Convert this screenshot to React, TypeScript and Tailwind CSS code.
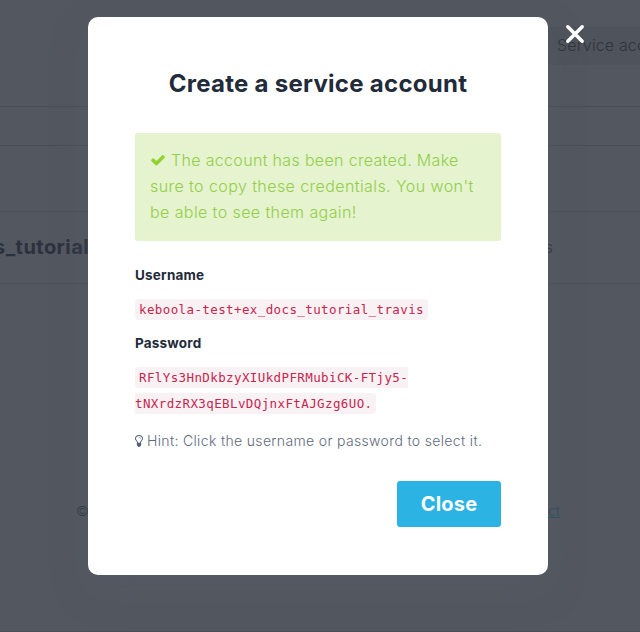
import React from "react";

function CheckIcon() {
  return (
    <svg viewBox="0 0 1792 1792" className="mr-[5px] inline-block h-4 w-4 fill-[#92d133] align-[-2px]">
      <path d="M1671 566q0 40-28 68l-724 724-136 136q-28 28-68 28t-68-28l-136-136-362-362q-28-28-28-68t28-68l136-136q28-28 68-28t68 28l294 295 656-657q28-28 68-28t68 28l136 136q28 28 28 68z" />
    </svg>
  );
}

function BulbIcon() {
  return (
    <svg viewBox="384 128 1024 1536" className="mr-1 h-3 w-2 fill-[#566178]">
      <path d="M1120 576q0 13-9.5 22.5t-22.5 9.5-22.5-9.5-9.5-22.5q0-46-54-71t-106-25q-13 0-22.5-9.5t-9.5-22.5 9.5-22.5 22.5-9.5q50 0 99.5 16t87 54 37.5 90zm160 0q0-72-34.5-134t-90-101.5-123-62-136.5-22.5-136.5 22.5-123 62-90 101.5-34.5 134q0 101 68 180 10 11 30.5 33t30.5 33q128 153 141 298h228q13-145 141-298 10-11 30.5-33t30.5-33q68-79 68-180zm128 0q0 155-103 268-45 49-74.5 87t-59.5 95.5-34 107.5q47 28 47 82 0 37-25 64 25 27 25 64 0 52-45 81 13 23 13 47 0 46-31.5 71t-77.5 25q-20 44-60 70t-87 26-87-26-60-70q-46 0-77.5-25t-31.5-71q0-24 13-47-45-29-45-81 0-37 25-64-25-27-25-64 0-54 47-82-4-50-34-107.5t-59.5-95.5-74.5-87q-103-113-103-268 0-99 44.5-184.5t117-142 164-89 186.5-32.5 186.5 32.5 164 89 117 142 44.5 184.5z" />
    </svg>
  );
}

function PageBehind() {
  return (
    <div className="flex h-full flex-col overflow-hidden">
      <div className="mt-[27px] flex h-[38px] justify-end">
        <div className="w-[92px] whitespace-nowrap bg-[#4f535b] pl-[9px] text-base font-light leading-[37px] tracking-[0.15px] text-[#30343c]">
          Service acc
        </div>
      </div>
      <div className="mt-[41px] h-10 border-y border-[#494e59]" />
      <div className="mt-[65px] flex h-[73px] items-center justify-between border-y border-[#4b505a]">
        <span className="-ml-[6px] whitespace-nowrap pb-px text-[20px] font-bold tracking-[0.45px] text-[#2b313e]">s_tutorial</span>
        <span className="mr-[87px] pb-px text-base font-light text-[#30343c]">s</span>
      </div>
      <div className="mt-[216px] flex justify-between pl-[76px] pr-20 text-[14px] font-light leading-[22px]">
        <span className="text-[#333944]">©</span>
        <span className="text-[#2c5060] underline">ct</span>
      </div>
      <div className="mt-auto h-px bg-[#4c4f58]" />
    </div>
  );
}

export default function App() {
  return (
    <div className="relative h-[632px] w-[640px] overflow-hidden bg-[#53575f] font-['Inter','Liberation_Sans',sans-serif]">
      <PageBehind />
      <div role="dialog" className="absolute left-[88px] top-[17px] flex h-[558px] w-[460px] flex-col rounded-[10px] bg-white px-[47px] pt-[50px] shadow-[0_15px_35px_rgba(85,93,107,0.45)]">
        <h1 className="whitespace-nowrap text-center text-[24px] font-bold leading-[34px] tracking-[0.27px] text-[#222b3a]">
          Create a service account
        </h1>
        <div className="mt-8 h-[108px] whitespace-nowrap rounded-[3px] bg-[#e5f3cf] px-[15px] pt-[14px] text-[16px] font-light leading-[26px] text-[#92ce48]">
          <p className="tracking-[0.33px]"><CheckIcon />The account has been created. Make</p>
          <p className="tracking-[0.42px]">sure to copy these credentials. You won't</p>
          <p className="tracking-[0.41px]">be able to see them again!</p>
        </div>
        <h2 className="mt-6 text-[13.5px] font-bold leading-5 tracking-[0.2px] text-[#222b3a]">Username</h2>
        <div className="mt-3 h-[26px] font-['DejaVu_Sans_Mono',monospace] text-[12.5px] leading-[26px] tracking-[0.39px] text-[#c7254e]">
          <code className="rounded-[4px] bg-[#f9f2f4] px-1 py-[3px] font-[inherit] text-[12.5px]">keboola-test+ex_docs_tutorial_travis</code>
        </div>
        <h2 className="mt-[10px] text-[13.5px] font-bold leading-5 tracking-[0.2px] text-[#222b3a]">Password</h2>
        <div className="mt-3 font-['DejaVu_Sans_Mono',monospace] text-[12.5px] leading-[26px] tracking-[0.39px] text-[#c7254e]">
          <code className="rounded-[4px] bg-[#f9f2f4] px-1 py-[3px] font-[inherit] text-[12.5px]">RFlYs3HnDkbzyXIUkdPFRMubiCK-FTjy5-<br />tNXrdzRX3qEBLvDQjnxFtAJGzg6UO.</code>
        </div>
        <p className="mt-[13px] flex items-center whitespace-nowrap text-[14px] font-light leading-[22px] tracking-[0.34px] text-[#5f6a80]">
          <BulbIcon />
          <span>Hint: Click the username or password to select it.</span>
        </p>
        <button className="mt-[29px] h-[46px] w-[104px] self-end rounded-[3px] bg-[#2bb3e3] text-[20px] font-bold tracking-[0.2px] text-white">Close</button>
      </div>
      <svg viewBox="0 0 20 20" className="absolute left-[565px] top-6 h-5 w-5 stroke-white stroke-[3.5]">
        <path d="M2.8 2.8L17.2 17.2M17.2 2.8L2.8 17.2" strokeLinecap="round" />
      </svg>
    </div>
  );
}
